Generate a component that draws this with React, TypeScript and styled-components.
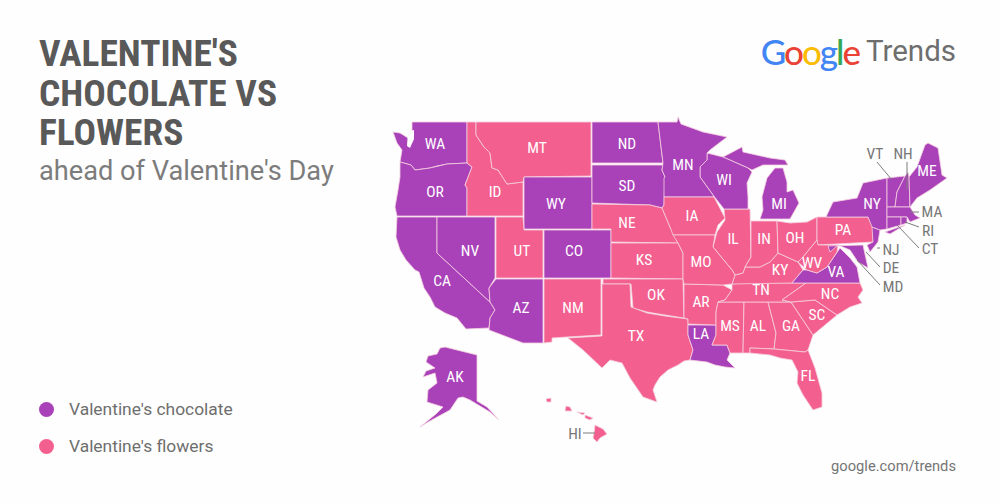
import React from "react";
import styled, { createGlobalStyle } from "styled-components";

const Global = createGlobalStyle`
  html, body { margin: 0; padding: 0; background: #fff; }
  body { font-family: Roboto, "Liberation Sans", sans-serif; }
`;

const PURPLE = "#a941b9";
const PINK = "#f3608f";

const Page = styled.div`
  width: 1000px;
  height: 504px;
  display: flex;
  overflow: hidden;
  background: #fefefe;
`;
const LeftColumn = styled.div`
  width: 380px;
  flex: none;
  box-sizing: border-box;
  padding: 34px 0 47px 39px;
  display: flex;
  flex-direction: column;
`;
const Title = styled.h1`
  margin: 0;
  width: 340px;
  font-family: Roboto, sans-serif;
  font-stretch: 75%;
  font-weight: 700;
  font-size: 37.4px;
  line-height: 39.5px;
  color: #595959;
  text-transform: uppercase;
`;
const Subtitle = styled.div`
  font-size: 27.2px;
  line-height: 36px;
  color: #7c7c7c;
  white-space: nowrap;
`;
const Legend = styled.ul`
  list-style: none;
  margin: auto 0 0;
  padding: 0;
  display: flex;
  flex-direction: column;
  gap: 16px;
`;
const LegendItem = styled.li`
  display: flex;
  align-items: center;
  gap: 15px;
  font-size: 17.4px;
  line-height: 21px;
  color: #6e6e6e;
`;
const Dot = styled.span<{ $color: string }>`
  width: 15px;
  height: 15px;
  border-radius: 50%;
  background: ${(p) => p.$color};
`;
const RightColumn = styled.div`
  flex: 1;
  box-sizing: border-box;
  padding: 0 44px 0 0;
  display: flex;
  flex-direction: column;
`;
const Logo = styled.div`
  height: 117px;
  flex: none;
  box-sizing: border-box;
  padding-top: 31px;
  display: flex;
  justify-content: flex-end;
  gap: 7px;
  line-height: 41px;
`;
const GoogleWord = styled.span`
  font-family: Lato, sans-serif;
  font-weight: 500;
  font-size: 35px;
  letter-spacing: -2px;
`;
const Letter = styled.span<{ $color: string }>`
  color: ${(p) => p.$color};
`;
const TrendsWord = styled.span`
  font-family: Roboto, sans-serif;
  font-weight: 400;
  font-size: 29.5px;
  color: #6e6e6e;
`;
const MapSvg = styled.svg`
  display: block;
  width: 580px;
  height: 340px;
  flex: none;
  margin-right: -4px;
`;
const StateShape = styled.polygon<{ $k: "c" | "f" }>`
  fill: ${(p) => (p.$k === "c" ? PURPLE : PINK)};
  stroke: #f5cfe0;
  stroke-width: 0.8;
  stroke-linejoin: round;
`;
const Water = styled.polygon`
  fill: #fefefe;
`;
const Leader = styled.line`
  stroke: #7c7c7c;
  stroke-width: 1;
`;
const Abbr = styled.text<{ $out?: boolean }>`
  font-family: Roboto, sans-serif;
  font-size: 15.5px;
  font-stretch: 80%;
  fill: ${(p) => (p.$out ? "#777777" : "#ffffff")};
  text-anchor: middle;
  dominant-baseline: central;
`;
const Footer = styled.div`
  text-align: right;
  font-size: 14.7px;
  line-height: 18px;
  color: #757575;
`;

const states: [string, "c" | "f", string][] = [
  ["WA", "c", "412,122 467,122 467,163 447,164 437,166 430,168 415,170 411,165 400,162 402,150 397,143 393,132 400,133 408,138 412,130"],
  ["OR", "c", "400,162 411,165 415,170 430,168 447,164 467,163 472,167 465,185 467,188 467,216 397,216 395,207 398,190 400,177"],
  ["CA", "c", "397,217 437,217 437,253 490,302 495,310 490,318 489,328 466,329 457,318 445,313 435,307 430,297 424,288 419,272 415,270 406,260 400,250 396,237"],
  ["NV", "c", "437,217 495,217 495,278 489,288 490,302 437,253"],
  ["ID", "f", "467,122 476,122 476,135 484,147 490,153 492,168 498,170 507,184 523,182 523,216 467,216 467,188 465,185 472,167 467,163"],
  ["MT", "f", "476,122 591,122 591,176 524,177 523,182 507,184 498,170 492,168 490,153 484,147 476,135"],
  ["WY", "c", "524,177 592,177 592,229 524,229"],
  ["UT", "f", "496,217 523,217 524,230 543,230 543,278 496,278"],
  ["CO", "c", "544,230 611,230 611,278 544,278"],
  ["AZ", "c", "496,279 543,279 543,343 523,343 489,330 490,318 495,310 490,302 489,288"],
  ["NM", "f", "544,279 601,279 601,335 567,337 552,338 552,342 544,343"],
  ["ND", "c", "592,122 658,122 663,163 592,163"],
  ["SD", "c", "592,165 663,165 662,170 665,177 664,205 662,208 650,205 592,203"],
  ["NE", "f", "592,204 650,205 662,208 670,227 678,243 611,242 611,229 592,229"],
  ["KS", "f", "611,243 678,243 683,253 683,279 611,278"],
  ["OK", "f", "603,279 683,279 684,318 665,315 647,312 633,308 631,284 603,284"],
  ["TX", "f", "602,284 630,284 631,307 647,313 665,316 688,319 688,335 693,350 690,360 684,361 678,365 668,370 660,377 655,385 653,390 657,402 643,397 630,378 622,363 610,360 602,368 583,350 568,338 602,336"],
  ["LA", "c", "688,325 716,325 716,335 712,345 727,345 730,353 727,360 735,368 725,367 715,365 707,362 690,360 693,350 688,335"],
  ["AR", "f", "684,284 723,285 732,290 725,300 718,302 716,312 716,325 688,324 688,319 684,318"],
  ["MS", "f", "718,302 744,302 743,353 730,353 727,345 712,345 716,335 716,325 716,312"],
  ["AL", "f", "744,302 768,302 776,333 774,349 750,348 750,353 743,353"],
  ["GA", "f", "768,302 791,302 803,320 813,335 808,350 805,352 774,349 776,333"],
  ["SC", "f", "791,302 815,300 837,315 813,335 803,320"],
  ["FL", "f", "750,348 774,349 805,352 808,350 815,368 822,393 822,407 813,410 803,395 797,383 798,372 792,360 780,358 770,355 750,353"],
  ["TN", "f", "732,290 732,284 743,283 806,283 782,300 791,302 718,302 725,300"],
  ["NC", "f", "806,283 860,283 863,290 858,297 862,303 850,307 837,315 815,300 791,302 782,300"],
  ["KY", "f", "732,284 792,283 803,270 798,262 778,253 770,262 760,267 745,267 743,273 735,275"],
  ["IL", "f", "724,209 750,209 751,257 745,267 743,273 735,275 732,270 713,247 717,232 725,220"],
  ["IN", "f", "751,221 777,221 778,253 770,262 760,267 745,267 751,257"],
  ["OH", "f", "777,221 790,223 807,222 817,217 817,240 803,257 798,262 778,253"],
  ["MI", "c", "760,219 790,219 799,203 793,190 787,192 787,182 783,168 775,168 767,178 762,197 763,210"],
  ["UP", "c", "723,157 742,147 743,152 770,158 785,160 788,165 763,165 752,170 748,168"],
  ["WI", "c", "707,153 723,157 748,168 752,172 747,183 748,197 748,209 724,209 713,195 700,177 700,167 707,160"],
  ["MN", "c", "658,122 677,122 678,117 681,124 703,132 727,137 710,150 707,153 707,160 700,167 700,177 713,195 714,197 664,197 664,178 665,177 662,170 663,163"],
  ["IA", "f", "664,197 714,197 725,218 718,225 715,235 673,235 670,227 662,208 664,205"],
  ["MO", "f", "673,235 715,235 713,247 732,270 735,275 732,284 723,285 684,284 683,279 683,253 678,243"],
  ["PA", "f", "817,217 826,217 868,217 873,227 873,242 817,245"],
  ["VA", "c", "792,283 860,283 857,267 850,258 840,248 827,267 817,273 807,270 803,270"],
  ["WV", "f", "817,240 818,245 838,245 837,252 827,267 817,273 807,270 798,262 803,257"],
  ["MD", "c", "828,246 863,245 868,268 858,262 850,250 838,245 830,252"],
  ["NJ", "c", "872,227 880,230 878,242 870,252 867,245 873,242"],
  ["NY", "c", "826,217 833,202 857,198 863,183 887,178 887,229 880,230 872,227 868,217"],
  ["VT", "c", "887,178 905,176 897,192 895,207 887,207"],
  ["NH", "c", "905,176 908,172 909,177 910,207 895,207 897,192"],
  ["ME", "c", "909,177 917,167 925,145 928,143 938,148 942,175 947,178 930,190 917,198 910,207"],
  ["MA", "c", "887,207 910,207 915,215 920,218 910,222 907,217 887,217"],
  ["CT", "c", "887,217 901,217 901,225 887,229"],
  ["RI", "c", "901,217 907,217 907,223 901,225"],
  ["LI", "c", "885,232 905,225 890,234"],
  ["AK", "c", "445,347 477,355 477,401 487,407 499,420 490,412 470,400 463,397 458,398 450,410 428,422 420,427 436,414 443,407 427,402 428,390 437,383 435,373 423,377 426,371 435,368 426,362 428,356 437,354 440,348"],
  ["HI1", "f", "595,425 603,429 607,434 600,438 597,442 593,438 594,433"],
  ["HI2", "f", "546,399 551,398 551,402 547,402"],
  ["HI3", "f", "566,406 570,407 572,411 565,411"],
  ["HI4", "f", "577,412 585,413 583,415"],
  ["HI5", "f", "585,415 593,418 590,420 585,418"],
];

const inside: [string, number, number][] = [
  ["WA", 435, 144], ["OR", 435, 192], ["ID", 495, 192], ["MT", 537, 148], ["ND", 627, 144], ["SD", 627, 186],
  ["WY", 556, 204], ["NV", 470, 251], ["UT", 522, 251], ["CO", 574, 251], ["NE", 627, 223], ["KS", 644, 260],
  ["CA", 442, 281], ["AZ", 521, 308], ["NM", 573, 308], ["OK", 656, 295], ["TX", 636, 336], ["MN", 683, 165],
  ["WI", 724, 180], ["MI", 779, 204], ["IA", 692, 216], ["IL", 733, 239], ["IN", 764, 239], ["OH", 795, 238],
  ["PA", 843, 230], ["KY", 780, 270], ["WV", 812, 263], ["VA", 836, 272], ["TN", 761, 290], ["NC", 830, 294],
  ["SC", 817, 315], ["GA", 791, 326], ["AL", 758, 326], ["MS", 730, 326], ["AR", 701, 302], ["LA", 701, 334],
  ["MO", 701, 262], ["FL", 808, 376], ["AK", 455, 377], ["NY", 872, 204], ["ME", 927, 171],
];
const outside: [string, number, number][] = [
  ["VT", 875, 154], ["NH", 903, 154], ["MA", 932, 212], ["RI", 928, 231], ["CT", 930, 249], ["NJ", 891, 250],
  ["DE", 891, 268], ["MD", 893, 287], ["HI", 575, 434],
];
const leaders: [number, number, number, number][] = [
  [877, 162, 892, 180], [907, 162, 907, 190], [910, 212, 919, 212], [905, 222, 919, 227],
  [897, 225, 919, 248], [877, 248, 880, 248], [866, 252, 880, 267], [857, 260, 880, 285], [583, 433, 595, 433],
];
const google: [string, string][] = [
  ["G", "#4285f4"], ["o", "#ea4335"], ["o", "#fbbc05"], ["g", "#4285f4"], ["l", "#34a853"], ["e", "#ea4335"],
];

export default function App() {
  return (
    <Page>
      <Global />
      <LeftColumn>
        <Title>Valentine's Chocolate vs Flowers</Title>
        <Subtitle>ahead of Valentine's Day</Subtitle>
        <Legend>
          <LegendItem><Dot $color={PURPLE} />Valentine's chocolate</LegendItem>
          <LegendItem><Dot $color={PINK} />Valentine's flowers</LegendItem>
        </Legend>
      </LeftColumn>
      <RightColumn>
        <Logo>
          <GoogleWord>
            {google.map(([c, col], i) => <Letter key={i} $color={col}>{c}</Letter>)}
          </GoogleWord>
          <TrendsWord>Trends</TrendsWord>
        </Logo>
        <MapSvg viewBox="380 117 580 340">
          {states.map(([id, k, pts]) => <StateShape key={id} $k={k} points={pts} />)}
          <Water points="408,131 414,130 414,139 410,148 407,146" />
          {leaders.map(([a, b, c, d], i) => <Leader key={i} x1={a} y1={b} x2={c} y2={d} />)}
          {inside.map(([t, x, y]) => <Abbr key={t} x={x} y={y}>{t}</Abbr>)}
          {outside.map(([t, x, y]) => <Abbr key={t} $out x={x} y={y}>{t}</Abbr>)}
        </MapSvg>
        <Footer>google.com/trends</Footer>
      </RightColumn>
    </Page>
  );
}
